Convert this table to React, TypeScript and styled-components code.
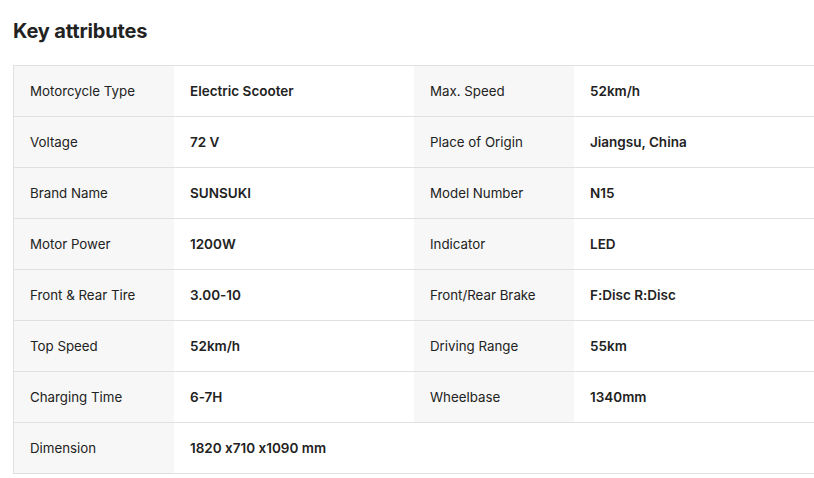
import styled, { createGlobalStyle } from 'styled-components';

const GlobalStyle = createGlobalStyle`
    body {
        margin: 0;
        background: #fff;
        font-family: Inter, "Noto Sans", sans-serif;
        font-feature-settings: "calt" 0;
        color: #222;
    }
`;

type Attr = [string, string];

const rows: Attr[][] = [
    [['Motorcycle Type', 'Electric Scooter'], ['Max. Speed', '52km/h']],
    [['Voltage', '72 V'], ['Place of Origin', 'Jiangsu, China']],
    [['Brand Name', 'SUNSUKI'], ['Model Number', 'N15']],
    [['Motor Power', '1200W'], ['Indicator', 'LED']],
    [['Front & Rear Tire', '3.00-10'], ['Front/Rear Brake', 'F:Disc R:Disc']],
    [['Top Speed', '52km/h'], ['Driving Range', '55km']],
    [['Charging Time', '6-7H'], ['Wheelbase', '1340mm']],
    [['Dimension', '1820 x710 x1090 mm']],
];

const App = () => {
    return (
        <Page>
            <GlobalStyle />
            <Title>Key attributes</Title>
            <Table>
                {rows.map((row, i) => (
                    <Row key={i}>
                        {[0, 1].map((j) =>
                            row[j] ? (
                                <Pair key={j}>
                                    <Label>{row[j][0]}</Label>
                                    <Value>{row[j][1]}</Value>
                                </Pair>
                            ) : (
                                <Pair key={j} />
                            )
                        )}
                    </Row>
                ))}
            </Table>
        </Page>
    );
};

export default App;

const Page = styled.div`
    padding: 17px 0 0 13px;
    width: 814px;
    box-sizing: border-box;
`;

const Title = styled.h2`
    margin: 0 0 20px;
    font-size: 20px;
    line-height: 28px;
    font-weight: 700;
    color: #222;
    letter-spacing: -0.15px;
`;

const Table = styled.div`
    width: 802px;
    border: 1px solid #e0e0e0;
    border-bottom: none;
`;

const Row = styled.div`
    display: grid;
    grid-template-columns: 400px 400px;
    border-bottom: 1px solid #e0e0e0;
`;

const Pair = styled.div`
    display: grid;
    grid-template-columns: 160px 240px;
    height: 50px;
`;

const Label = styled.div`
    background: #f7f7f7;
    padding: 0 16px;
    display: flex;
    align-items: center;
    font-size: 13.3px;
    color: #222;
`;

const Value = styled.div`
    padding: 0 16px;
    display: flex;
    align-items: center;
    font-size: 13.5px;
    font-weight: 600;
    color: #222;
`;
